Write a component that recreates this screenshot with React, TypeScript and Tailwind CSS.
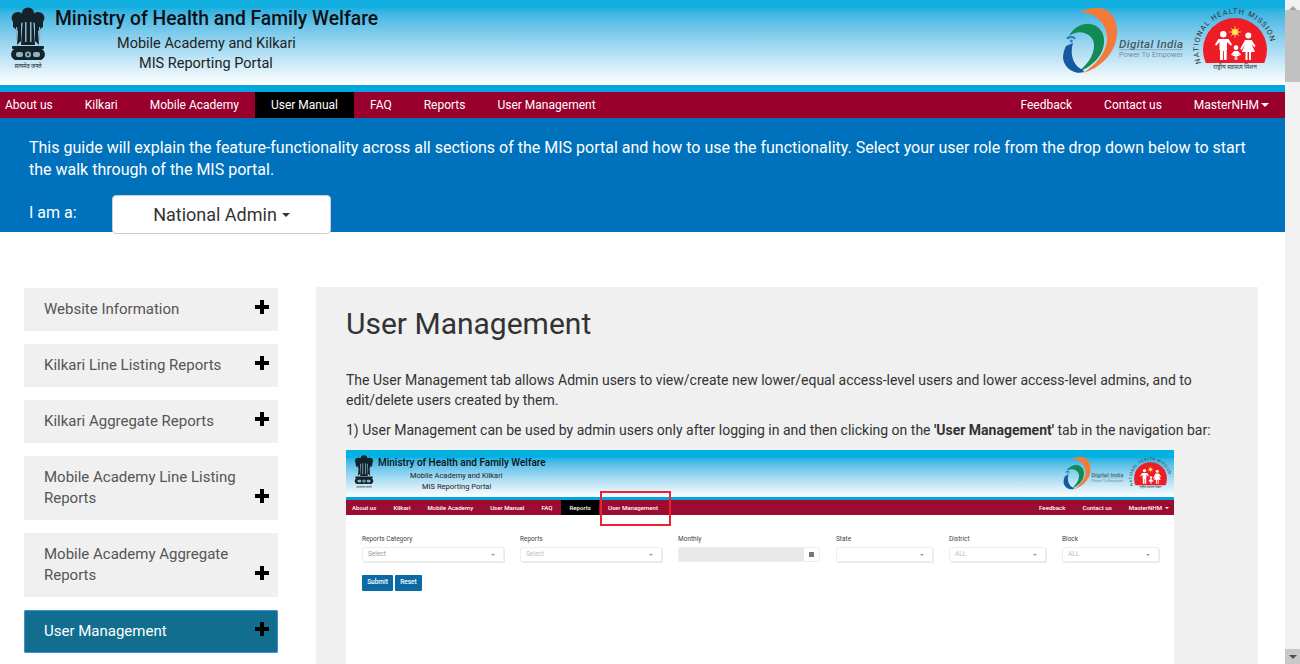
function Emblem({ className }: { className: string }) {
  return (
    <svg viewBox="0 0 36 64" className={className}>
      <g fill="#13222b">
        <ellipse cx="18" cy="8" rx="6" ry="5.5" />
        <ellipse cx="8" cy="13" rx="6.5" ry="6" />
        <ellipse cx="28" cy="13" rx="6.5" ry="6" />
        <path d="M3 16 L11 18 L11 36 L7 40 L8 26 L3 22 Z" />
        <path d="M33 16 L25 18 L25 36 L29 40 L28 26 L33 22 Z" />
        <path d="M13 12 L23 12 L25 40 L11 40 Z" />
        <rect x="2" y="41" width="32" height="3" rx="1" />
        <path d="M4 44 H32 C36 47 36 53 31 55 H5 C0 53 0 47 4 44 Z" />
      </g>
      <g fill="#8fb3bd">
        <rect x="15" y="17" width="1.5" height="20" />
        <rect x="20" y="17" width="1.5" height="20" />
        <rect x="6" y="22" width="1.2" height="13" />
        <rect x="29" y="22" width="1.2" height="13" />
        <circle cx="18" cy="49.5" r="3" />
        <rect x="6" y="47" width="7" height="5" rx="2" />
        <rect x="23" y="47" width="7" height="5" rx="2" />
      </g>
      <circle cx="18" cy="49.5" r="1.2" fill="#13222b" />
      <text x="18" y="63" textAnchor="middle" fontSize="5.6" fill="#222" fontFamily="'Noto Sans', sans-serif">
        सत्यमेव जयते
      </text>
    </svg>
  );
}

function DigitalIndia({ className }: { className: string }) {
  return (
    <svg viewBox="0 0 122 66" className={className}>
      <path d="M18 4 C26 0 36 -1 42 1 C52 5 56 16 55 27 C53 46 38 60 21 65 C32 58 44 46 45 32 C46 18 36 5 18 4 Z" fill="#f47a3a" />
      <path d="M7 28 C11 20 20 15 28 16 C37 17 43 25 42 35 C41 49 28 60 14 65 C24 59 33 47 32 36 C31 26 18 20 7 28 Z" fill="#128a54" />
      <path d="M4 38 L11 35 C8 44 10 56 19 61 C21 62 22 63 22 64 C12 67 2 60 1 50 C1 46 2 42 4 38 Z" fill="#17599f" />
      <path d="M4 30 C7 27 11 27 14 30 L12.5 31.5 C10.5 29.5 8.5 29.5 6 31.5 Z" fill="#2f7fc0" />
      <circle cx="9.3" cy="33" r="1.5" fill="#2f7fc0" />
      <text x="57" y="40" fontSize="11.6" fontStyle="italic" fontWeight="500" fill="#4a5a66" textLength="64" fontFamily="Roboto, sans-serif">
        Digital India
      </text>
      <rect x="57" y="41.5" width="64" height="0.6" fill="#7d8a92" />
      <text x="57" y="49" fontSize="7.2" fill="#7d8a92" textLength="64" fontFamily="Roboto, sans-serif">
        Power To Empower
      </text>
    </svg>
  );
}

function NhmLogo({ className, id }: { className: string; id: string }) {
  return (
    <svg viewBox="0 0 80 62" className={`overflow-visible ${className}`}>
      <defs>
        <clipPath id={`${id}-clip`}>
          <rect x="0" y="0" width="80" height="55" />
        </clipPath>
        <path id={`${id}-arc`} d="M4 55 A36.4 36.4 0 1 1 72 55" fill="none" />
      </defs>
      <circle cx="38" cy="42" r="32" fill="#ee1c25" clipPath={`url(#${id}-clip)`} />
      <text fontSize="7.4" letterSpacing="1.05" fill="#333" fontFamily="Roboto, sans-serif">
        <textPath href={`#${id}-arc`}>NATIONAL HEALTH MISSION</textPath>
      </text>
      <circle cx="38" cy="24" r="3.3" fill="#ffd21f" />
      <path d="M38 18 V30 M32 24 H44 M34 20 L42 28 M42 20 L34 28" stroke="#ffe98a" strokeWidth="0.7" />
      <g fill="#fff">
        <circle cx="26.3" cy="26.3" r="3.2" />
        <path d="M21.5 31 H31.5 L35 36.5 L33.8 37.8 L30 34 V42 H29.7 V52 H26.9 V43 H26 V52 H23 V42 H22.5 V34 L19.2 37.8 L18 36.5 Z" />
        <circle cx="51.3" cy="27.6" r="3" />
        <path d="M48 32 H54.7 L58.5 38 L57.3 39.3 L54.5 36 L58 44 H54 V52 H52 V44 H50.5 V52 H48.5 V44 H44.7 L48.2 36.5 L44.5 42 L43.2 41 Z" />
        <circle cx="39" cy="39.7" r="2.4" />
        <path d="M37 43 H41 L44 46.5 L43 47.5 L41 45.5 L42.5 48 H40.3 V52 H39.3 V48 H38.7 V52 H37.7 V48 H35.5 L37 45.5 L35 47.5 L34 46.5 Z" />
      </g>
      <text x="38" y="61" textAnchor="middle" fontSize="6" fill="#333" fontFamily="'Noto Sans', sans-serif">
        राष्ट्रीय स्वास्थ्य मिशन
      </text>
    </svg>
  );
}

function PlusIcon() {
  return (
    <svg viewBox="0 0 14 14" className="mb-[6px] h-[14px] w-[14px] shrink-0">
      <path d="M5 0 H9 V5 H14 V9 H9 V14 H5 V9 H0 V5 H5 Z" fill="#000" />
    </svg>
  );
}

function Caret({ className }: { className: string }) {
  return <span className={`inline-block h-0 w-0 border-x-4 border-t-4 border-x-transparent border-t-current ${className}`} />;
}

const sideItems = [
  { label: "Website Information" },
  { label: "Kilkari Line Listing Reports" },
  { label: "Kilkari Aggregate Reports" },
  { label: "Mobile Academy Line Listing Reports" },
  { label: "Mobile Academy Aggregate Reports" },
  { label: "User Management", active: true },
];

function TopHeader() {
  return (
    <header className="flex h-[85px] items-start justify-between bg-gradient-to-b from-[#10afe0] from-[8%] to-white">
      <div className="flex">
        <Emblem className="ml-[10px] mt-[5px] h-[64px] w-[36px]" />
        <div className="ml-[9px]">
          <h2 className="mt-[6px] text-[19.3px] font-medium leading-[26px] text-[#0c1014]">Ministry of Health and Family Welfare</h2>
          <p className="ml-[62px] mt-[2px] text-[14.5px] leading-[20px] text-[#222]">Mobile Academy and Kilkari</p>
          <p className="ml-[84px] text-[14.5px] leading-[20px] text-[#222]">MIS Reporting Portal</p>
        </div>
      </div>
      <div className="mr-[8px] mt-[8px] flex">
        <DigitalIndia className="h-[66px] w-[122px]" />
        <NhmLogo id="nhm-top" className="ml-[13px] h-[62px] w-[80px]" />
      </div>
    </header>
  );
}

function TopNav() {
  return (
    <nav className="flex h-[26px] justify-between bg-[#99002d] text-[12px] leading-[26px] text-white">
      <ul className="flex">
        <li className="pl-[5px] pr-4">About us</li>
        <li className="px-4">Kilkari</li>
        <li className="px-4">Mobile Academy</li>
        <li className="bg-black px-4">User Manual</li>
        <li className="px-4">FAQ</li>
        <li className="px-4">Reports</li>
        <li className="px-4">User Management</li>
      </ul>
      <ul className="flex">
        <li className="px-4">Feedback</li>
        <li className="px-4">Contact us</li>
        <li className="flex items-center pl-4 pr-4">
          MasterNHM
          <Caret className="ml-[2px]" />
        </li>
      </ul>
    </nav>
  );
}

function MiniSelect({ label, value, width, muted }: { label: string; value?: string; width: string; muted?: boolean }) {
  return (
    <div className={width}>
      <p className="text-[6.5px] leading-[9px] text-[#444]">{label}</p>
      <div className="mt-[3px] flex h-[15px] items-center justify-between rounded-[2px] border border-[#eeeeee] pl-[5px] pr-[6px] text-[6.5px] text-[#999] shadow-[1px_1px_0_#e8e8e8]">
        <span className={muted ? "text-[#bbb]" : ""}>{value}</span>
        <Caret className="scale-50" />
      </div>
    </div>
  );
}

function PortalShot() {
  return (
    <div className="relative w-[828px] bg-white">
      <div className="flex h-[47px] items-start justify-between bg-gradient-to-b from-[#00b1e2] from-[15%] to-white">
        <div className="flex">
          <Emblem className="ml-[8px] mt-[4px] h-[35px] w-[20px]" />
          <div className="ml-[4px]">
            <p className="mt-[7px] text-[10px] font-medium leading-[12px] text-[#0c1014]">Ministry of Health and Family Welfare</p>
            <p className="ml-[32px] mt-[1px] text-[7.5px] leading-[11px] text-[#222]">Mobile Academy and Kilkari</p>
            <p className="ml-[44px] text-[7.5px] leading-[11px] text-[#222]">MIS Reporting Portal</p>
          </div>
        </div>
        <div className="mr-[2px] mt-[7px] flex">
          <DigitalIndia className="h-[33px] w-[63px]" />
          <NhmLogo id="nhm-mini" className="ml-[6px] h-[32px] w-[41px]" />
        </div>
      </div>
      <div className="h-[3px] bg-[#00a6dc]" />
      <div className="flex h-[15px] justify-between bg-[#9c0c30] text-[6.1px] font-medium leading-[15px] text-white">
        <ul className="flex">
          <li className="pl-[6px] pr-[8.5px]">About us</li>
          <li className="px-[8.5px]">Kilkari</li>
          <li className="px-[8.5px]">Mobile Academy</li>
          <li className="px-[8.5px]">User Manual</li>
          <li className="px-[8.5px]">FAQ</li>
          <li className="bg-black px-[8.5px]">Reports</li>
          <li className="px-[8.5px]">User Management</li>
        </ul>
        <ul className="flex">
          <li className="px-[8.5px]">Feedback</li>
          <li className="px-[8.5px]">Contact us</li>
          <li className="flex items-center pl-[8.5px] pr-[3px]">
            MasterNHM
            <Caret className="ml-[1px] scale-50" />
          </li>
        </ul>
      </div>
      <div className="h-[200px] pl-[16px] pt-[20px]">
        <div className="flex">
          <MiniSelect label="Reports Category" value="Select" width="w-[142px]" />
          <MiniSelect label="Reports" value="Select" width="ml-[16px] w-[142px]" muted />
          <div className="ml-[16px] w-[142px]">
            <p className="text-[6.5px] leading-[9px] text-[#444]">Monthly</p>
            <div className="mt-[3px] flex h-[15px] rounded-[2px] border border-[#eeeeee]">
              <div className="w-[125px] bg-[#e9e9e9]" />
              <div className="flex flex-1 items-center justify-center">
                <span className="h-[5px] w-[5px] bg-[#777]" />
              </div>
            </div>
          </div>
          <MiniSelect label="State" width="ml-[16px] w-[97px]" />
          <MiniSelect label="District" value="ALL" width="ml-[16px] w-[97px]" muted />
          <MiniSelect label="Block" value="ALL" width="ml-[16px] w-[97px]" muted />
        </div>
        <div className="mt-[13px] flex gap-[2px]">
          <span className="flex h-[16px] w-[31px] items-center justify-center rounded-[1px] bg-[#0b69a3] text-[6.5px] font-medium text-white">Submit</span>
          <span className="flex h-[16px] w-[27px] items-center justify-center rounded-[1px] bg-[#0b69a3] text-[6.5px] font-medium text-white">Reset</span>
        </div>
      </div>
      <div className="absolute left-[254px] top-[41px] h-[35px] w-[71px] border-2 border-[#ee2130]" />
    </div>
  );
}

export default function App() {
  return (
    <div className="flex h-screen overflow-hidden bg-white font-['Roboto',sans-serif]">
      <div className="min-w-0 flex-1">
        <TopHeader />
        <div className="h-[7px] bg-[#00a6dc]" />
        <TopNav />

        <section className="h-[114px] bg-[#0071bc] pl-[29px] pr-[30px] pt-[19px] text-white">
          <p className="text-[16px] leading-[22px]">
            This guide will explain the feature-functionality across all sections of the MIS portal and how to use the functionality. Select your user role from the drop down below to start the walk through of the MIS portal.
          </p>
          <div className="mt-[14px] flex items-start">
            <span className="mt-[7px] w-[83px] text-[16px] leading-[22px]">I am a:</span>
            <button className="flex h-[39px] w-[219px] items-center justify-center rounded-[4px] border border-[#cccccc] bg-white text-[18px] text-[#333]">
              National Admin
              <Caret className="ml-[5px]" />
            </button>
          </div>
        </section>

        <div className="flex gap-[38px] pl-[24px] pt-[56px]">
          <aside className="flex w-[254px] shrink-0 flex-col gap-[13px]">
            {sideItems.map((item) => (
              <div
                key={item.label}
                className={
                  item.active
                    ? "flex items-end justify-between rounded-[2px] bg-[#126e8f] py-[11px] pl-[20px] pr-[9px] text-[15px] leading-[21px] text-white outline outline-1 -outline-offset-1 outline-[#3d8fd9]"
                    : "flex items-end justify-between bg-[#f0f0f0] py-[11px] pl-[20px] pr-[9px] text-[15px] leading-[21px] text-[#555]"
                }
              >
                <span className="w-[205px]">{item.label}</span>
                <PlusIcon />
              </div>
            ))}
          </aside>

          <main className="-mt-[1px] h-[400px] w-[942px] shrink-0 bg-[#f0f0f0] pl-[30px] pt-[17px]">
            <h1 className="text-[30px] font-normal leading-[40px] text-[#333]">User Management</h1>
            <p className="mt-[26px] w-[880px] text-[14px] leading-[20px] text-[#333]">
              The User Management tab allows Admin users to view/create new lower/equal access-level users and lower access-level admins, and to edit/delete users created by them.
            </p>
            <p className="mt-[10px] text-[14px] leading-[20px] text-[#333]">
              1) User Management can be used by admin users only after logging in and then clicking on the <b>'User Management'</b> tab in the navigation bar:
            </p>
            <div className="mt-[10px]">
              <PortalShot />
            </div>
          </main>
        </div>
      </div>

      <div className="flex h-full w-[15px] shrink-0 flex-col items-center bg-[#f1f1f1]">
        <div className="flex h-[10px] w-full items-end justify-center">
          <span className="h-0 w-0 border-x-[4px] border-b-[4px] border-x-transparent border-b-[#a3a3a3]" />
        </div>
        <div className="w-full flex-1">
          <div className="h-[72px] w-full bg-[#c1c1c1]" />
        </div>
        <div className="flex h-[15px] w-full items-center justify-center bg-[#c8c8c8]">
          <span className="h-0 w-0 border-x-[4px] border-t-[4px] border-x-transparent border-t-[#505050]" />
        </div>
      </div>
    </div>
  );
}
